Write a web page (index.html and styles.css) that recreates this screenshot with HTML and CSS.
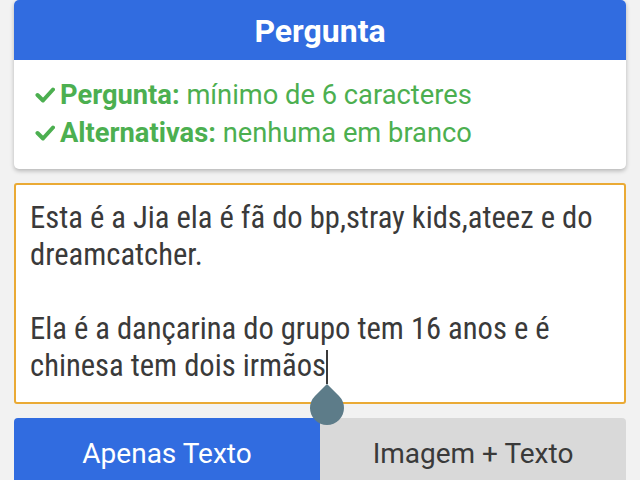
FILE: index.html
```html
<!DOCTYPE html>
<html lang="pt">
<head>
    <meta charset="UTF-8">
    <meta name="viewport" content="width=device-width, initial-scale=1.0">
    <title>Pergunta</title>
    <link rel="stylesheet" href="styles.css">
</head>
<body>
    <!-- Regras da pergunta -->
    <div class="card">
        <div class="card-header">Pergunta</div>
        <div class="rules">
            <div class="rule">
                <svg class="check" viewBox="0 0 20 16"><polyline points="2.5,8 8,13.5 18,2.5"/></svg>
                <span><b>Pergunta:</b> mínimo de 6 caracteres</span>
            </div>
            <div class="rule">
                <svg class="check" viewBox="0 0 20 16"><polyline points="2.5,8 8,13.5 18,2.5"/></svg>
                <span><b>Alternativas:</b> nenhuma em branco</span>
            </div>
        </div>
    </div>

    <!-- Texto da pergunta -->
    <div class="question">
        <p>Esta é a Jia ela é fã do bp,stray kids,ateez e do dreamcatcher.</p>
        <p>Ela é a dançarina do grupo tem 16 anos e é chinesa tem dois irmãos<span class="caret"><span class="handle"></span></span></p>
    </div>

    <!-- Tipo de pergunta -->
    <div class="tabs">
        <button class="tab active">Apenas Texto</button>
        <button class="tab">Imagem + Texto</button>
    </div>
</body>
</html>
```
FILE: styles.css
```css
body {
    font-family: "Roboto Condensed", Roboto, sans-serif;
    font-stretch: condensed;
    margin: 0;
    padding: 0 14px;
    background: #f2f2f2;
    color: #3a3a3a;
    height: 480px;
    overflow: hidden;
}

.card {
    background: white;
    border-radius: 5px;
    box-shadow: 0 2px 4px rgba(0, 0, 0, 0.25);
    overflow: hidden;
}

.card-header {
    background: #316ce0;
    color: white;
    font-family: Roboto, sans-serif;
    font-stretch: normal;
    font-size: 32px;
    font-weight: bold;
    text-align: center;
    height: 60px;
    line-height: 62px;
}

.rules {
    padding: 16px 0 17px 21px;
    color: #4caf50;
    font-family: Roboto, sans-serif;
    font-stretch: normal;
    font-size: 27.3px;
}

.rule {
    line-height: 38px;
    display: flex;
    align-items: center;
    gap: 6px;
    white-space: nowrap;
}

.rule b {
    font-weight: bold;
}

.check {
    width: 20px;
    height: 16px;
    margin-right: -1px;
}

.check polyline {
    fill: none;
    stroke: #4caf50;
    stroke-width: 4;
    stroke-linecap: round;
    stroke-linejoin: round;
}

.question {
    margin-top: 14px;
    background: white;
    border: 2px solid #eaaa35;
    border-radius: 3px;
    padding: 14px 14px 18px 14px;
    font-size: 30.6px;
    line-height: 37px;
}

.question p {
    margin: 0;
}

.question p + p {
    margin-top: 37px;
}

.caret {
    display: inline-block;
    width: 2px;
    height: 34px;
    background: #3a3a3a;
    vertical-align: -8px;
    position: relative;
}

.handle {
    position: absolute;
    top: 41px;
    left: -16px;
    width: 34px;
    height: 34px;
    background: #5d7c89;
    border-radius: 0 50% 50% 50%;
    transform: rotate(45deg);
    z-index: 2;
}

.tabs {
    display: flex;
    margin-top: 14px;
}

.tab {
    flex: 1;
    height: 70px;
    border: none;
    font-family: Roboto, sans-serif;
    font-size: 28px;
    padding: 0;
    background: #d9d9d9;
    color: #3a3a3a;
    border-radius: 0 4px 0 0;
}

.tab.active {
    background: #316ce0;
    color: white;
    border-radius: 4px 0 0 0;
}
```
